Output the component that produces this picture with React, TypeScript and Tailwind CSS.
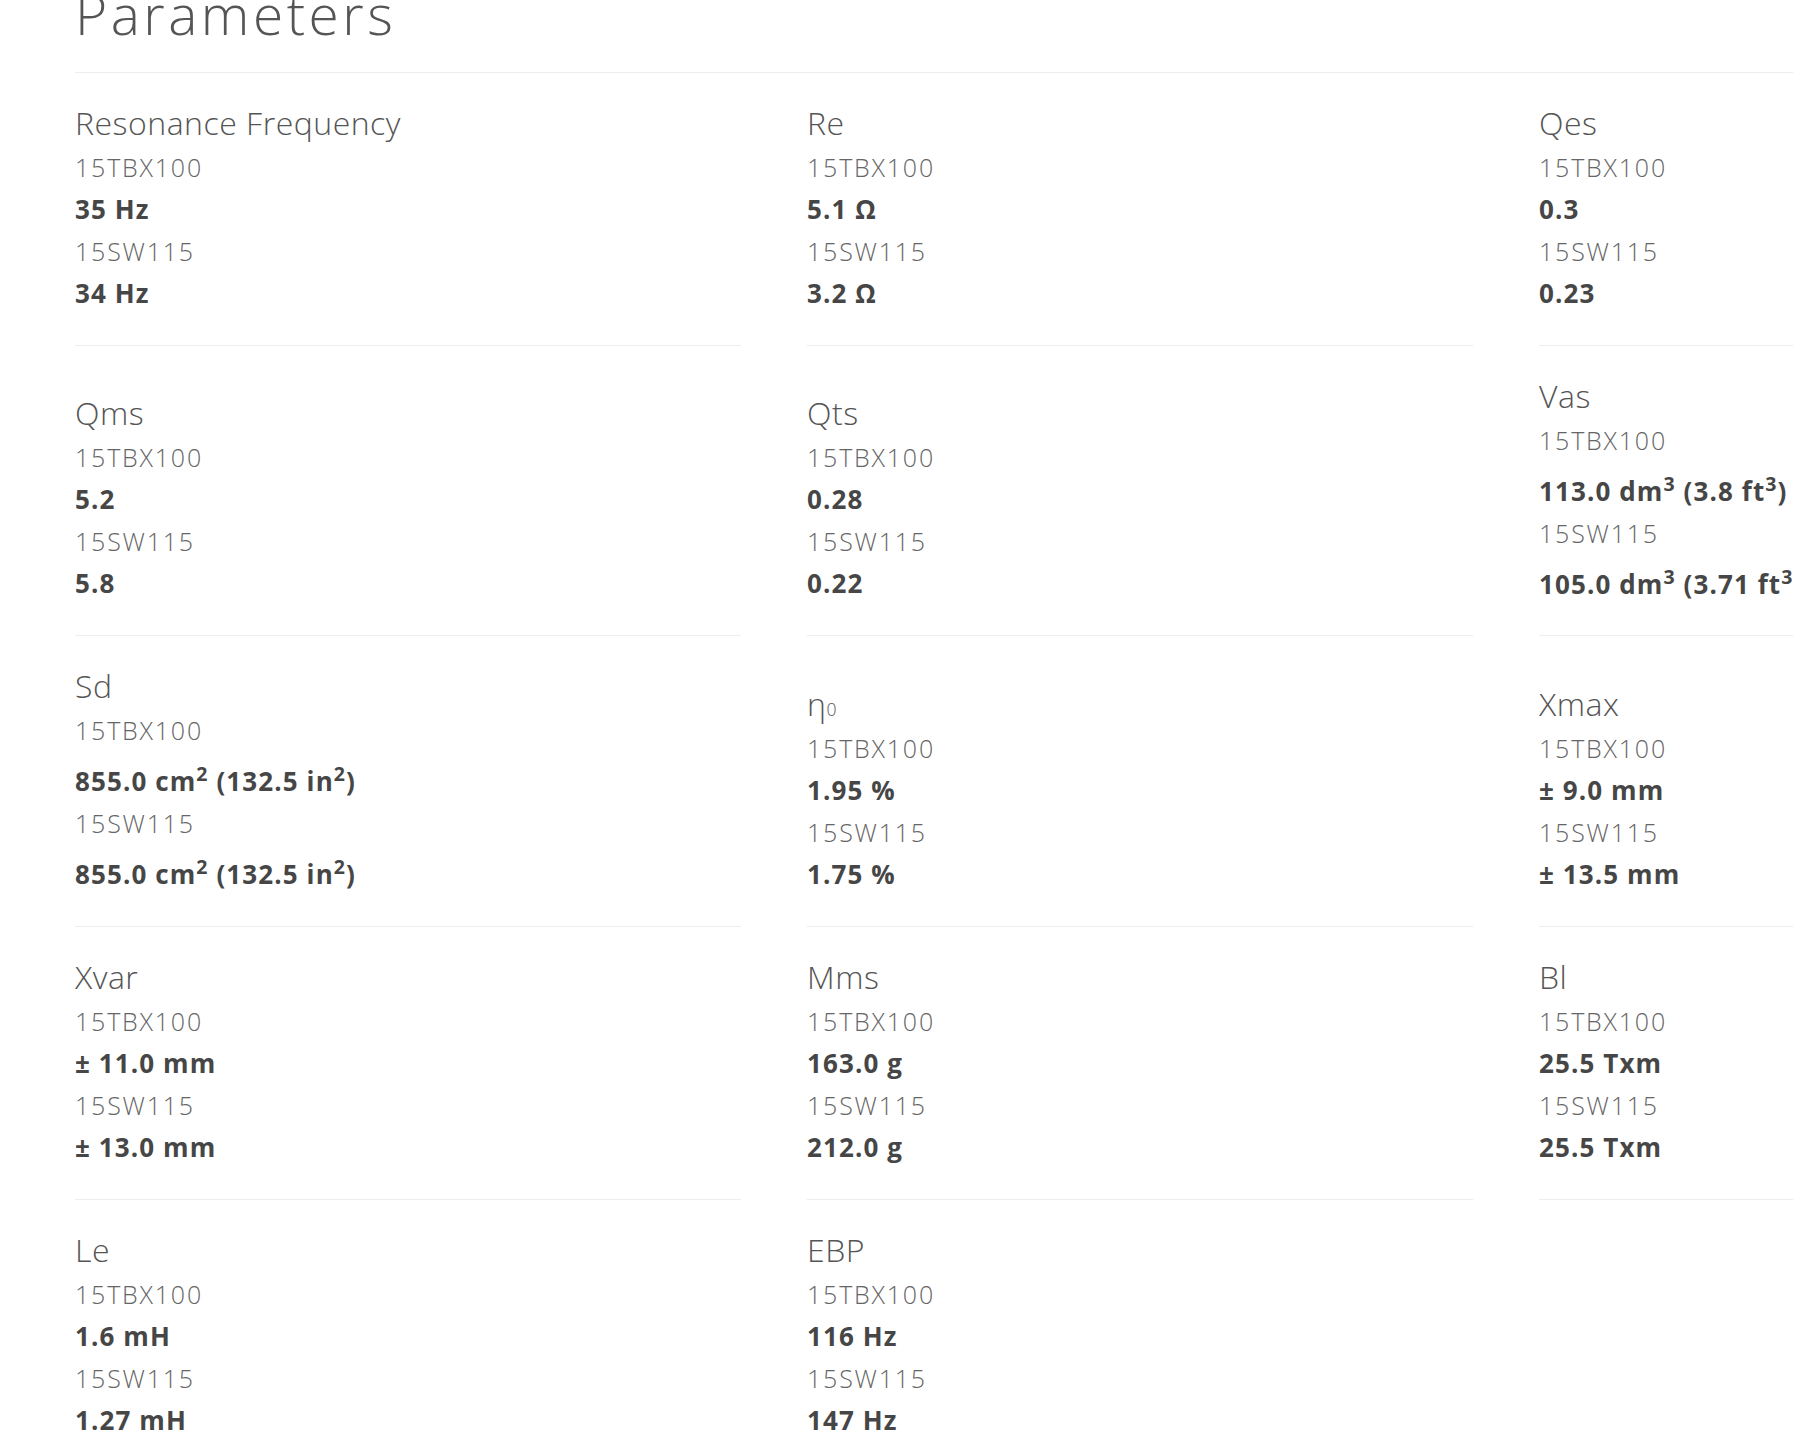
import React from "react";

type Value = React.ReactNode;

type Param = {
  name: React.ReactNode;
  a: Value;
  b: Value;
};

const Sup = ({ children }: { children: React.ReactNode }) => (
  <sup className="relative top-0 align-super text-[0.75em] leading-[46px]">
    {children}
  </sup>
);

const params: (Param | null)[] = [
  { name: "Resonance Frequency", a: "35 Hz", b: "34 Hz" },
  { name: "Re", a: "5.1 Ω", b: "3.2 Ω" },
  { name: "Qes", a: "0.3", b: "0.23" },
  { name: "Qms", a: "5.2", b: "5.8" },
  { name: "Qts", a: "0.28", b: "0.22" },
  {
    name: "Vas",
    a: (
      <>
        113.0 dm<Sup>3</Sup> (3.8 ft<Sup>3</Sup>)
      </>
    ),
    b: (
      <>
        105.0 dm<Sup>3</Sup> (3.71 ft<Sup>3</Sup>)
      </>
    ),
  },
  {
    name: "Sd",
    a: (
      <>
        855.0 cm<Sup>2</Sup> (132.5 in<Sup>2</Sup>)
      </>
    ),
    b: (
      <>
        855.0 cm<Sup>2</Sup> (132.5 in<Sup>2</Sup>)
      </>
    ),
  },
  {
    name: (
      <>
        η<span className="text-[0.55em] leading-none">0</span>
      </>
    ),
    a: "1.95 %",
    b: "1.75 %",
  },
  { name: "Xmax", a: "± 9.0 mm", b: "± 13.5 mm" },
  { name: "Xvar", a: "± 11.0 mm", b: "± 13.0 mm" },
  { name: "Mms", a: "163.0 g", b: "212.0 g" },
  { name: "Bl", a: "25.5 Txm", b: "25.5 Txm" },
  { name: "Le", a: "1.6 mH", b: "1.27 mH" },
  { name: "EBP", a: "116 Hz", b: "147 Hz" },
  null,
];

function ParamCell({ param }: { param: Param | null }) {
  if (!param) return <div />;
  return (
    <div className="flex flex-col justify-end border-b border-[#ededed] pt-[26px] pb-[31px]">
      <div className="text-[32px] font-light leading-[47px] tracking-[0.5px] text-[#555]">
        {param.name}
      </div>
      <div className="text-[25px] font-light leading-[42px] tracking-[1.8px] text-[#666]">
        15TBX100
      </div>
      <div className="whitespace-nowrap text-[26px] font-bold leading-[42px] tracking-[1.1px] text-[#464646]">
        {param.a}
      </div>
      <div className="text-[25px] font-light leading-[42px] tracking-[1.8px] text-[#666]">
        15SW115
      </div>
      <div className="whitespace-nowrap text-[26px] font-bold leading-[42px] tracking-[1.1px] text-[#464646]">
        {param.b}
      </div>
    </div>
  );
}

export default function App() {
  return (
    <div
      className="h-[1448px] w-full overflow-hidden bg-white"
      style={{ fontFamily: '"Open Sans", "Noto Sans", sans-serif' }}
    >
      <div className="ml-[75px] w-[2130px]">
        <div className="-mt-[14px] border-b border-[#ededed] pb-[31px]">
          <h1 className="text-[55px] font-light leading-none tracking-[3.5px] text-[#555]">
            Parameters
          </h1>
        </div>
        <div className="grid grid-cols-3 gap-x-[66px]">
          {params.map((p, i) => (
            <ParamCell key={i} param={p} />
          ))}
        </div>
      </div>
    </div>
  );
}
